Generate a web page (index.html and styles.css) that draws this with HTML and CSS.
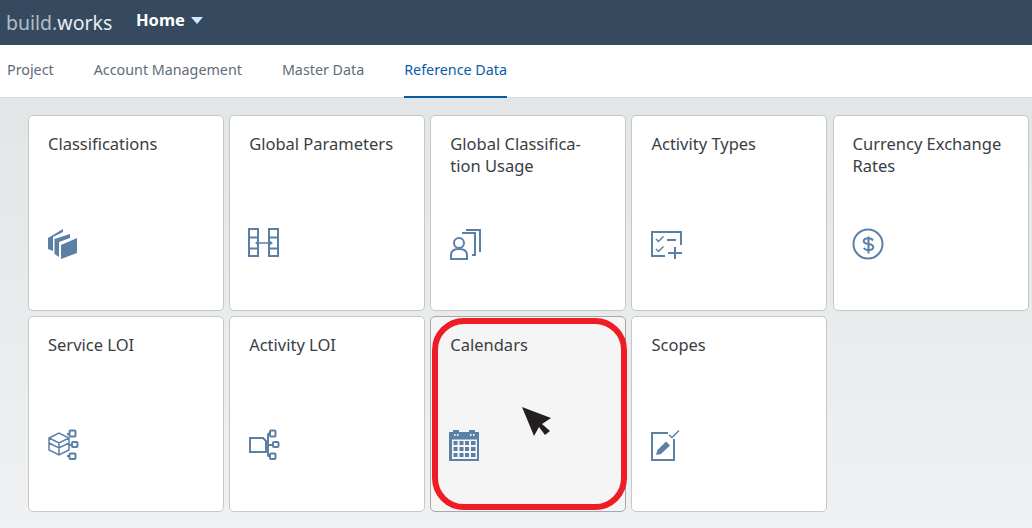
FILE: index.html
```html
<!DOCTYPE html>
<html>
<head>
    <title>build.works Home</title>
    <link rel="stylesheet" href="styles.css">
</head>
<body>
    <div class="header">
        <div class="logo"><span class="logo-dim">build.</span>works</div>
        <div class="home">Home <span class="caret"></span></div>
    </div>
    <div class="tabs">
        <div class="tab">Project</div>
        <div class="tab">Account Management</div>
        <div class="tab">Master Data</div>
        <div class="tab active">Reference Data</div>
    </div>
    <div class="content">
        <div class="tile">
            <div class="tile-title">Classifications</div>
            <svg class="icon" viewBox="0 0 32 32">
                <path class="fill" d="M1 10 16 1v3L6 9v14l-5-2z"/>
                <path class="fill" d="M7.500 11 23 6v4l-11 4v15l-4.500-3z"/>
                <path class="fill" d="M14 17 30 10v15l-16 6z"/>
            </svg>
        </div>
        <div class="tile">
            <div class="tile-title">Global Parameters</div>
            <svg class="icon" viewBox="0 0 32 32">
                <path class="line" d="M1 1h9v27H1zM1 9.500h9M1 20.500h9M21 1h9v27h-9zM21 9.500h9M21 20.500h9"/>
                <path class="line thin" d="M9 15h14"/>
                <path class="fill" d="M7 15l4-3v6zM25 15l-4-3v6z"/>
            </svg>
        </div>
        <div class="tile">
            <div class="tile-title">Global Classifica-<br>tion Usage</div>
            <svg class="icon" viewBox="0 0 32 32">
                <circle class="line" cx="10" cy="15" r="5"/>
                <path class="line" d="M2 31v-4c0-4 3-6 8-6s8 2 8 6v4z"/>
                <path class="line" d="M13 5h13v22h-3M17 2h14v22"/>
            </svg>
        </div>
        <div class="tile">
            <div class="tile-title">Activity Types</div>
            <svg class="icon" viewBox="0 0 32 32">
                <path class="line" d="M15 28H2V4h29v13"/>
                <path class="line thin" d="M6 11l2.500 2.500 5-5M6 21l2.500 2.500 5-5"/>
                <path class="line" d="M17 12h9M25 19v12M18 25h14"/>
            </svg>
        </div>
        <div class="tile">
            <div class="tile-title">Currency Exchange<br>Rates</div>
            <svg class="icon" viewBox="0 0 32 32">
                <circle class="line" cx="16" cy="16" r="14.500"/>
                <path class="line" d="M21 12.500c-.8-1.500-2.500-2.300-4.500-2.300-3 0-4.800 1.300-4.800 3s1.800 2.400 4.800 2.900 4.800 1.300 4.800 3-1.800 3.100-4.800 3.100c-2 0-3.800-.8-4.600-2.300M16.500 8.500v17"/>
            </svg>
        </div>
        <div class="tile">
            <div class="tile-title">Service LOI</div>
            <svg class="icon" viewBox="0 0 32 32">
                <path class="line thin" d="M2 9l10-5 10 5v12l-10 5-10-5zM2 9l10 5 10-5M12 14v12M2 14l10 5 10-5"/>
                <path class="line" d="M20 5h2M22 16h3M20 27h2"/>
                <rect class="line" x="22.500" y="1.500" width="6" height="6" rx="1"/>
                <rect class="line" x="25" y="13" width="5.500" height="5" rx="1"/>
                <rect class="line" x="22.500" y="24.500" width="6" height="5.500" rx="1"/>
            </svg>
        </div>
        <div class="tile">
            <div class="tile-title">Activity LOI</div>
            <svg class="icon" viewBox="0 0 32 32">
                <path class="line" d="M2 9h13l3 3v11H2zM18 16h7M20 4.500v23M20 4.500h2M20 27h2"/>
                <rect class="line" x="22" y="1.500" width="5.500" height="6" rx="1"/>
                <rect class="line" x="25" y="13" width="5.500" height="5" rx="1"/>
                <rect class="line" x="22" y="24.500" width="5.500" height="5.500" rx="1"/>
            </svg>
        </div>
        <div class="tile hover">
            <div class="tile-title">Calendars</div>
            <svg class="icon" viewBox="0 0 32 32">
                <path class="fill" fill-rule="evenodd" d="M0 3h4V1h6v2h10V1h6v2h4v29H0zM3 10.500V30h25V10.500zM5 5v2h1.500V5zM8 5v2h1.500V5zM21 5v2h1.500V5zM24 5v2h1.500V5z"/>
                <path class="fill" d="M4.500 12h4v4h-4zM10.500 12h4v4h-4zM16 12h4v4h-4zM22 12h4.500v4H22zM4.500 18h4v4h-4zM10.500 18h4v4h-4zM16 18h4v4h-4zM22 18h4.500v4H22zM4.500 24h4v4h-4zM10.500 24h4v4h-4zM16 24h4v4h-4zM22 24h4.500v4H22z"/>
            </svg>
            <div class="ring"></div>
            <svg class="cursor" viewBox="0 0 32 32">
                <path d="M1 1 30 12l-9 6 8 7-5 4-6-8-5 9z"/>
            </svg>
        </div>
        <div class="tile">
            <div class="tile-title">Scopes</div>
            <svg class="icon" viewBox="0 0 32 32">
                <path class="line" d="M18 4H2v27h22V10"/>
                <path class="fill" d="M6 26l1.500-5L16 12.500l4 4L11 25z"/>
                <path class="line thin" d="M19 6l3 2.500L29 1.500"/>
            </svg>
        </div>
    </div>
</body>
</html>
```
FILE: styles.css
```css
body {
    margin: 0;
    height: 528px;
    overflow: hidden;
    font-family: "Noto Sans", sans-serif;
    background: #e6e9ea;
}

.header {
    display: flex;
    align-items: center;
    height: 45px;
    padding-left: 6px;
    background: #354a5f;
}

.logo {
    width: 130px;
    font-size: 19.500px;
    color: #e8edf2;
}

.logo-dim {
    color: #b5bcc4;
}

.home {
    margin-bottom: 7px;
    font-size: 16.500px;
    font-weight: bold;
    color: #fff;
}

.caret {
    display: inline-block;
    margin-left: 2px;
    border-left: 6px solid transparent;
    border-right: 6px solid transparent;
    border-top: 7px solid #d1e8ff;
    vertical-align: 2px;
}

.tabs {
    display: flex;
    gap: 40px;
    height: 53px;
    padding-left: 7px;
    box-sizing: border-box;
    background: #fff;
    border-bottom: 1px solid #d9dcde;
}

.tab {
    height: 53px;
    box-sizing: border-box;
    padding-top: 15px;
    font-size: 14.300px;
    color: #5e6c79;
}

.tab.active {
    color: #0a5ba8;
    border-bottom: 2px solid #0a5ba8;
}

.content {
    display: grid;
    grid-template-columns: repeat(5, 196px);
    grid-auto-rows: 196px;
    column-gap: 5.150px;
    row-gap: 5px;
    height: 430px;
    box-sizing: border-box;
    padding: 17px 0 0 28px;
    background: linear-gradient(#e2e6e7, #eff1f2);
}

.tile {
    position: relative;
    box-sizing: border-box;
    padding: 17px 19px;
    background: #fff;
    border: 1px solid #c4c8cb;
    border-radius: 5px;
}

.tile.hover {
    background: #f5f5f5;
    border-color: #a6a9ab;
}

.tile-title {
    height: 95px;
    font-size: 16.500px;
    line-height: 22px;
    color: #3a3e42;
}

.icon {
    display: block;
    width: 32px;
    height: 32px;
    margin-left: -1px;
}

.line {
    fill: none;
    stroke: #5b80a6;
    stroke-width: 2;
}

.thin {
    stroke-width: 1.500;
}

.fill {
    fill: #5b80a6;
}

.ring {
    position: absolute;
    left: 1px;
    top: 1px;
    width: 195px;
    height: 192px;
    box-sizing: border-box;
    border: 6px solid #ee1c25;
    border-radius: 32px;
}

.cursor {
    position: absolute;
    left: 90px;
    top: 89px;
    width: 32px;
    height: 32px;
    fill: #231f20;
}
```
